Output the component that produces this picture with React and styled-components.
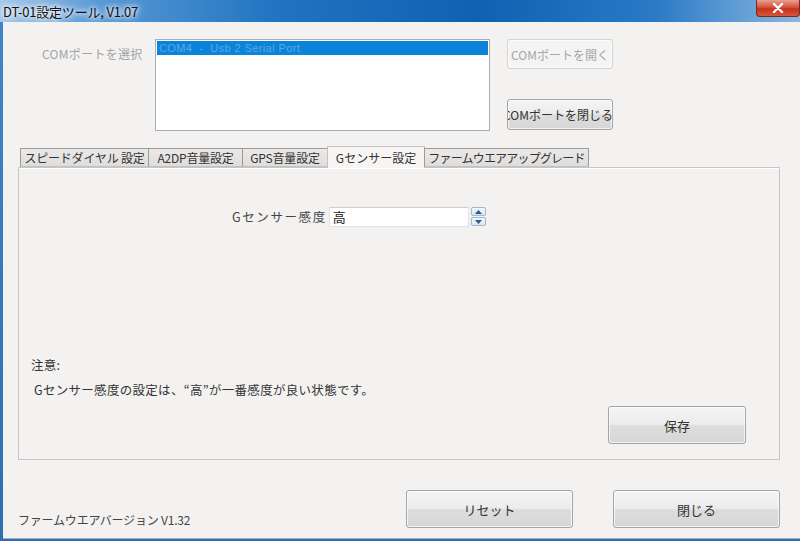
import React from "react";
import styled, { createGlobalStyle } from "styled-components";

const GlobalStyle = createGlobalStyle`
  html, body {
    margin: 0;
    padding: 0;
    background: #f3f2f0;
  }
  body {
    font-family: "Noto Sans CJK JP", "Noto Sans", sans-serif;
    font-size: 12px;
    color: #333;
  }
`;

const Window = styled.div`
  width: 800px;
  height: 541px;
  display: flex;
  flex-direction: column;
  background: linear-gradient(180deg, #3f86c8 0%, #2d6eb0 100%);
  overflow: hidden;
`;

const TitleBar = styled.div`
  height: 22px;
  display: flex;
  align-items: flex-start;
  justify-content: space-between;
  background: linear-gradient(90deg, #a6c9e8 0%, #5a9ad6 12%, #1f73c0 35%, #0f62b2 60%, #2a7ac6 82%, #8ab7df 100%);
`;

const Title = styled.div`
  padding: 2px 0 0 3px;
  font-size: 13px;
  color: #111;
  text-shadow: 0 0 4px #fff, 0 0 6px #fff, 0 0 8px rgba(255, 255, 255, 0.8);
  letter-spacing: -0.2px;
`;

const CloseButton = styled.div`
  width: 44px;
  height: 17px;
  border: 1px solid #7a2a1c;
  border-top: none;
  border-radius: 0 0 4px 4px;
  background: linear-gradient(180deg, #e9a092 0%, #d4533c 45%, #c7321c 55%, #d8563a 100%);
  display: flex;
  align-items: center;
  justify-content: center;
  box-sizing: border-box;
`;

const Client = styled.div`
  flex: 1;
  margin-left: 3px;
  margin-bottom: 2px;
  background: #f3f2f0;
  display: flex;
  flex-direction: column;
  padding: 17px 20px 0 15px;
  border-bottom: 1px solid #a8aeb4;
`;

const PortSection = styled.div`
  display: flex;
  align-items: flex-start;
  height: 92px;
`;

const PortLabel = styled.div`
  width: 137px;
  padding: 6px 0 0 24px;
  box-sizing: border-box;
  color: #a4a4a4;
  font-size: 12px;
  letter-spacing: 0.3px;
`;

const ListBox = styled.div`
  width: 335px;
  height: 92px;
  box-sizing: border-box;
  background: #fff;
  border: 1px solid #a9adb2;
  padding: 1px;
`;

const ListItem = styled.div`
  height: 14px;
  line-height: 14px;
  padding-left: 2px;
  background: ${(p) => (p.selected ? "#0a84d8" : "transparent")};
  color: ${(p) => (p.selected ? "#5ea6e6" : "#333")};
  font-family: "Liberation Sans", "Noto Sans CJK JP", sans-serif;
  font-size: 11px;
  letter-spacing: 0.4px;
  white-space: pre;
`;

const PortButtons = styled.div`
  margin-left: 17px;
  display: flex;
  flex-direction: column;
  gap: 30px;
`;

const Button = styled.button`
  width: ${(p) => p.w}px;
  height: ${(p) => p.h}px;
  box-sizing: border-box;
  padding: 0;
  border-radius: 3px;
  font-family: "Noto Sans CJK JP", sans-serif;
  font-size: ${(p) => p.fs || 12}px;
  color: ${(p) => (p.disabled ? "#a6a6a6" : "#333")};
  border: 1px solid ${(p) => (p.disabled ? "#d2d2d2" : "#a5a5a5")};
  background: ${(p) =>
    p.disabled
      ? "#f4f4f4"
      : "linear-gradient(180deg, #f4f4f4 0%, #ececec 48%, #dddddd 52%, #d6d6d6 100%)"};
  box-shadow: inset 0 0 0 1px rgba(255, 255, 255, 0.7);
  display: flex;
  align-items: center;
  justify-content: ${(p) => (p.clip ? "flex-start" : "center")};
  overflow: hidden;
  white-space: nowrap;
`;

const ClippedText = styled.span`
  flex-shrink: 0;
  margin-left: -5px;
`;

const Tabs = styled.div`
  display: flex;
  align-items: flex-end;
  margin-top: 14px;
  padding-left: 2px;
  height: 22px;
  position: relative;
  z-index: 1;
`;

const Tab = styled.div`
  width: ${(p) => p.w}px;
  height: ${(p) => (p.active ? 22 : 19)}px;
  box-sizing: border-box;
  display: flex;
  align-items: center;
  justify-content: center;
  font-size: 12px;
  color: #333;
  border: 1px solid ${(p) => (p.active ? "#c2c2c2" : "#9c9c9c")};
  border-bottom: ${(p) => (p.active ? "none" : "1px solid #c2c2c2")};
  margin-right: -1px;
  background: ${(p) => (p.active ? "#f6f5f3" : "linear-gradient(180deg, #ebeae8 0%, #dedddb 100%)")};
  margin-bottom: ${(p) => (p.active ? "-1px" : "0")};
  white-space: nowrap;
  overflow: hidden;
  letter-spacing: ${(p) => p.ls}px;
`;

const Panel = styled.div`
  height: 293px;
  box-sizing: border-box;
  border: 1px solid #c6c6c6;
  box-shadow: inset 0 1px 0 #fff;
  background: #f3f2f0;
  display: flex;
  flex-direction: column;
  padding: 38px 33px 15px 12px;
`;

const SettingRow = styled.div`
  display: flex;
  align-items: center;
  padding-left: 201px;
  height: 21px;
`;

const SettingLabel = styled.div`
  font-size: 12.5px;
  color: #444;
  margin-right: 2px;
  letter-spacing: 1.6px;
`;

const Spinner = styled.div`
  display: flex;
  align-items: center;
`;

const SpinInput = styled.div`
  width: 140px;
  height: 20px;
  box-sizing: border-box;
  background: #fff;
  border: 1px solid #e2e2e2;
  border-top-color: #cfcfcf;
  padding-left: 3px;
  line-height: 18px;
  font-size: 13px;
  color: #222;
`;

const SpinArrows = styled.div`
  margin-left: 2px;
  display: flex;
  flex-direction: column;
  gap: 1px;
`;

const Arrow = styled.div`
  width: 15px;
  height: 9px;
  box-sizing: border-box;
  border: 1px solid #9fb8d2;
  border-radius: 2px;
  background: linear-gradient(180deg, #f4f8fc 0%, #d8e6f3 100%);
  display: flex;
  align-items: center;
  justify-content: center;
`;

const Spacer = styled.div`
  flex: 1;
`;

const Note = styled.div`
  font-size: 12.5px;
  color: #333;
  line-height: 16px;
  letter-spacing: 0.3px;
  margin-bottom: ${(p) => p.mb || 0}px;
  padding-left: ${(p) => p.pl || 0}px;
`;

const ButtonRow = styled.div`
  display: flex;
  justify-content: flex-end;
  margin-top: 8px;
`;

const Footer = styled.div`
  flex: 1;
  display: flex;
  align-items: flex-start;
  padding-top: 30px;
`;

const Version = styled.div`
  margin-top: 21px;
  font-size: 12px;
  color: #444;
  width: 390px;
  letter-spacing: -0.2px;
`;

const FooterButtons = styled.div`
  display: flex;
  gap: 40px;
`;

const Tri = ({ up }) => (
  <svg width="7" height="4" viewBox="0 0 7 4">
    <path d={up ? "M0 4 L3.5 0 L7 4 Z" : "M0 0 L3.5 4 L7 0 Z"} fill="#2a5a8e" />
  </svg>
);

const tabs = [
  { label: "スピードダイヤル 設定", w: 129, ls: -0.2 },
  { label: "A2DP音量設定", w: 95, ls: -0.2 },
  { label: "GPS音量設定", w: 86, ls: -0.2 },
  { label: "Gセンサー設定", w: 98, ls: 0 },
  { label: "ファームウエアアップグレード", w: 165, ls: -0.8 },
];

export default function App() {
  return (
    <>
      <GlobalStyle />
      <Window>
        <TitleBar>
          <Title>DT-01設定ツール, V1.07</Title>
          <CloseButton>
            <svg width="12" height="10" viewBox="0 0 12 10">
              <path d="M2 1 L10 9 M10 1 L2 9" stroke="#fff" strokeWidth="2.4" strokeLinecap="round" />
            </svg>
          </CloseButton>
        </TitleBar>
        <Client>
          <PortSection>
            <PortLabel>COMポートを選択</PortLabel>
            <ListBox>
              <ListItem selected>{"COM4  -  Usb 2 Serial Port"}</ListItem>
            </ListBox>
            <PortButtons>
              <Button w={106} h={30} disabled>COMポートを開く</Button>
              <Button w={106} h={31} clip>
                <ClippedText>COMポートを閉じる</ClippedText>
              </Button>
            </PortButtons>
          </PortSection>
          <Tabs>
            {tabs.map((t, i) => (
              <Tab key={t.label} w={t.w} ls={t.ls} active={i === 3}>{t.label}</Tab>
            ))}
          </Tabs>
          <Panel>
            <SettingRow>
              <SettingLabel>Gセンサー感度</SettingLabel>
              <Spinner>
                <SpinInput>高</SpinInput>
                <SpinArrows>
                  <Arrow><Tri up /></Arrow>
                  <Arrow><Tri /></Arrow>
                </SpinArrows>
              </Spinner>
            </SettingRow>
            <Spacer />
            <Note mb={9}>注意:</Note>
            <Note pl={3}>Gセンサー感度の設定は、“高”が一番感度が良い状態です。</Note>
            <ButtonRow>
              <Button w={138} h={38} fs={13}>保存</Button>
            </ButtonRow>
          </Panel>
          <Footer>
            <Version>ファームウエアバージョン V1.32</Version>
            <FooterButtons>
              <Button w={167} h={38} fs={13}>リセット</Button>
              <Button w={167} h={38} fs={13}>閉じる</Button>
            </FooterButtons>
          </Footer>
        </Client>
      </Window>
    </>
  );
}
